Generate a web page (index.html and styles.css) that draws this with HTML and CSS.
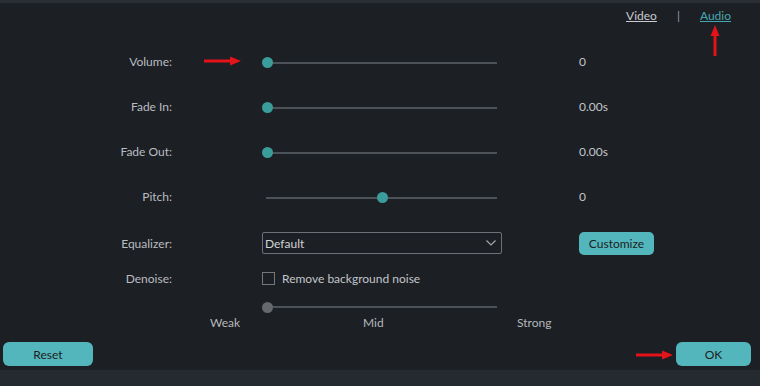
FILE: index.html
```html
<!DOCTYPE html>
<html lang="en">
<head>
    <meta charset="UTF-8">
    <meta name="viewport" content="width=device-width, initial-scale=1.0">
    <title>Audio Settings</title>
    <link rel="stylesheet" href="styles.css">
</head>
<body>
    <div class="top-strip"></div>

    <div class="tabs">
        <a class="tab">Video</a>
        <span class="tab-sep">|</span>
        <a class="tab active">Audio</a>
    </div>

    <div class="settings">
        <div class="label">Volume:</div>
        <div class="control">
            <div class="slider"><span class="thumb" style="left: 0%"></span></div>
        </div>
        <div class="value">0</div>

        <div class="label">Fade In:</div>
        <div class="control">
            <div class="slider"><span class="thumb" style="left: 0%"></span></div>
        </div>
        <div class="value">0.00s</div>

        <div class="label">Fade Out:</div>
        <div class="control">
            <div class="slider"><span class="thumb" style="left: 0%"></span></div>
        </div>
        <div class="value">0.00s</div>

        <div class="label">Pitch:</div>
        <div class="control">
            <div class="slider pitch"><span class="thumb" style="left: 50%"></span></div>
        </div>
        <div class="value">0</div>

        <div class="label">Equalizer:</div>
        <div class="control">
            <div class="select">
                <span>Default</span>
                <svg width="10" height="6" viewBox="0 0 10 6"><path d="M0.5 0.5 L5 5 L9.5 0.5" fill="none" stroke="#a3a8ad" stroke-width="1.2"/></svg>
            </div>
        </div>
        <div class="value"><button class="btn customize">Customize</button></div>

        <div class="label">Denoise:</div>
        <div class="control">
            <label class="check"><span class="box"></span>Remove background noise</label>
        </div>
        <div class="value"></div>

        <div class="label"></div>
        <div class="control end">
            <div class="slider disabled"><span class="thumb" style="left: 0%"></span></div>
        </div>
        <div class="value"></div>
    </div>

    <div class="scale">
        <span>Weak</span>
        <span>Mid</span>
        <span>Strong</span>
    </div>

    <div class="footer">
        <button class="btn reset">Reset</button>
        <button class="btn ok">OK</button>
    </div>

    <div class="bottom-strip"></div>

    <!-- annotation arrows -->
    <svg class="arrow arrow-volume" width="40" height="10" viewBox="0 0 40 10"><path d="M0 5 H28" stroke="#e4131a" stroke-width="3"/><path d="M26 0.5 L37 5 L26 9.5 Z" fill="#e4131a"/></svg>
    <svg class="arrow arrow-audio" width="10" height="32" viewBox="0 0 10 32"><path d="M5 32 V10" stroke="#e4131a" stroke-width="3"/><path d="M0.5 12 L5 1 L9.5 12 Z" fill="#e4131a"/></svg>
    <svg class="arrow arrow-ok" width="40" height="10" viewBox="0 0 40 10"><path d="M0 5 H28" stroke="#e4131a" stroke-width="3"/><path d="M26 0.5 L37 5 L26 9.5 Z" fill="#e4131a"/></svg>
</body>
</html>
```

FILE: styles.css
```css
body {
    background-color: #1c1f24;
    color: #b9bcc0;
    font-family: Lato, "Open Sans", sans-serif;
    font-size: 12px;
    margin: 0;
    height: 386px;
    overflow: hidden;
    position: relative;
}

.top-strip {
    height: 3px;
    background-color: #2a2f36;
}

.tabs {
    display: flex;
    justify-content: flex-end;
    align-items: center;
    gap: 20px;
    height: 16px;
    line-height: 16px;
    margin-top: 5px;
    padding-right: 29px;
}

.tab {
    color: #c9ccd0;
    text-decoration: underline;
}

.tab.active {
    color: #45a8b1;
}

.tab-sep {
    color: #9a9ea3;
}

.settings {
    display: grid;
    grid-template-columns: 262px 240px 1fr;
    grid-template-rows: 45px 45px 45px 45px 48px 22px 26px;
    margin-top: 15px;
    align-items: center;
}

.label {
    text-align: right;
    padding-right: 90px;
}

.value {
    padding-left: 77px;
    color: #c3c6ca;
}

.control.end {
    align-self: end;
    padding-bottom: 3px;
}

.slider {
    position: relative;
    width: 230px;
    height: 12px;
    margin-left: 5px;
    top: 1px;
}

.slider::before {
    content: "";
    position: absolute;
    left: 0;
    right: 0;
    top: 5px;
    height: 2px;
    background-color: #4d5258;
}

.slider.pitch::before {
    left: -1px;
}

.thumb {
    position: absolute;
    top: 0.5px;
    width: 11px;
    height: 11px;
    margin-left: -5.5px;
    border-radius: 50%;
    background-color: #3a9d9b;
}

.slider.disabled .thumb {
    background-color: #66686b;
}

.select {
    display: flex;
    justify-content: space-between;
    align-items: center;
    height: 20px;
    border: 1px solid #6d7177;
    border-radius: 2px;
    padding: 0 5px 0 2px;
    color: #d2d4d7;
}

.check {
    display: flex;
    align-items: center;
    gap: 7px;
    color: #c3c6ca;
}

.box {
    width: 11px;
    height: 11px;
    border: 1px solid #74787d;
}

.scale {
    display: grid;
    grid-template-columns: 153px 154px auto;
    padding-left: 210px;
    height: 16px;
    line-height: 16px;
    color: #b5b8bc;
}

.btn {
    background-color: #54b6bd;
    color: #1b1e22;
    border: none;
    font-family: Lato, "Open Sans", sans-serif;
    font-size: 12px;
    padding: 0;
    cursor: pointer;
}

.customize {
    width: 75px;
    height: 23px;
    border-radius: 5px;
}

.footer {
    display: flex;
    justify-content: space-between;
    margin-top: 11px;
    padding: 0 9px 0 3px;
}

.reset {
    width: 90px;
    height: 24px;
    border-radius: 6px;
}

.ok {
    width: 75px;
    height: 24px;
    border-radius: 6px;
}

.bottom-strip {
    position: absolute;
    left: 0;
    right: 0;
    bottom: 0;
    height: 16px;
    background-color: #252a31;
}

.arrow {
    position: absolute;
}

.arrow-volume {
    left: 204px;
    top: 56px;
}

.arrow-audio {
    left: 710px;
    top: 24px;
}

.arrow-ok {
    left: 636px;
    top: 350px;
}
```
